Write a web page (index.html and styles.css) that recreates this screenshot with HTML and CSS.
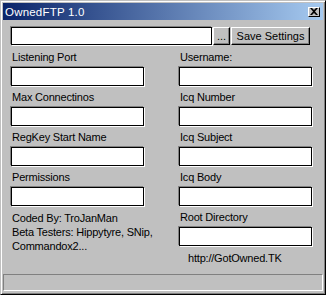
FILE: index.html
```html
<!DOCTYPE html>
<html>
<head>
<meta charset="utf-8">
<link rel="stylesheet" href="styles.css">
</head>
<body>
<div class="window">
  <div class="titlebar">
    <span class="title">OwnedFTP 1.0</span>
    <span class="close"><svg width="8" height="7" viewBox="0 0 8 7"><path d="M0 0h2l2 2 2-2h2L5 3.5 8 7H6L4 5 2 7H0l3-3.5z" fill="#000"/></svg></span>
  </div>
  <div class="content">
    <div class="toprow">
      <div class="field wide"></div>
      <div class="btn dots">...</div>
      <div class="btn save">Save Settings</div>
    </div>
    <div class="cols">
      <div class="col">
        <div class="label">Listening Port</div>
        <div class="field"></div>
        <div class="label">Max Connectinos</div>
        <div class="field"></div>
        <div class="label">RegKey Start Name</div>
        <div class="field"></div>
        <div class="label">Permissions</div>
        <div class="field"></div>
        <div class="info">Coded By: TroJanMan<br>Beta Testers: Hippytyre, SNip,<br>Commandox2...</div>
      </div>
      <div class="col">
        <div class="label">Username:</div>
        <div class="field"></div>
        <div class="label">Icq Number</div>
        <div class="field"></div>
        <div class="label">Icq Subject</div>
        <div class="field"></div>
        <div class="label">Icq Body</div>
        <div class="field"></div>
        <div class="label">Root Directory</div>
        <div class="field"></div>
        <div class="url">http://GotOwned.TK</div>
      </div>
    </div>
  </div>
  <div class="status"></div>
</div>
</body>
</html>
```
FILE: styles.css
```css
html, body {
  margin: 0;
  padding: 0;
  background: #c0c0c0;
}
.window {
  width: 326px;
  height: 295px;
  box-sizing: border-box;
  background: #c0c0c0;
  border-top: 1px solid #c0c0c0;
  border-left: 1px solid #c0c0c0;
  border-right: 1px solid #000;
  border-bottom: 1px solid #000;
  box-shadow: inset 1px 1px 0 #fff, inset -1px -1px 0 #808080;
  padding: 2px;
  display: flex;
  flex-direction: column;
  font-family: "Liberation Sans", Arial, sans-serif;
  font-size: 11px;
  color: #000;
}
.titlebar {
  height: 17px;
  background: linear-gradient(to right, #0a246a, #a6caf0);
  display: flex;
  align-items: center;
  justify-content: space-between;
  padding: 0 2px 0 2px;
}
.title {
  color: #fff;
  font-size: 11.5px;
  letter-spacing: 0.2px;
}
.close {
  width: 12px;
  height: 10px;
  box-sizing: border-box;
  background: #c0c0c0;
  border-top: 1px solid #fff;
  border-left: 1px solid #fff;
  border-right: 1px solid #000;
  border-bottom: 1px solid #000;
  display: flex;
  align-items: center;
  justify-content: center;
  margin-right: 1px;
}
.content {
  flex: 1;
  padding: 7px 0 0 8px;
}
.toprow {
  display: flex;
  height: 18px;
}
.field {
  height: 19px;
  width: 133px;
  box-sizing: border-box;
  background: #fff;
  border: 1px solid #000;
  box-shadow: -1px -1px 0 #808080, 1px 1px 0 #fff;
}
.toprow .field {
  height: 18px;
}
.field.wide {
  width: 201px;
}
.btn {
  box-sizing: border-box;
  height: 18px;
  border-top: 1px solid #fff;
  border-left: 1px solid #fff;
  border-right: 1px solid #000;
  border-bottom: 1px solid #000;
  box-shadow: inset -1px -1px 0 #808080;
  display: flex;
  align-items: center;
  justify-content: center;
  line-height: 13px;
}
.dots {
  width: 17px;
  margin-left: 1px;
}
.save {
  width: 79px;
  margin-left: 1px;
}
.cols {
  display: grid;
  grid-template-columns: 168px 140px;
  margin-top: 1px;
}
.col {
  display: flex;
  flex-direction: column;
}
.label {
  padding-top: 5px;
  height: 16px;
  line-height: 13px;
  padding-left: 1px;
  white-space: nowrap;
  letter-spacing: -0.2px;
}
.info {
  padding-top: 5px;
  line-height: 14px;
  padding-left: 1px;
  white-space: nowrap;
  letter-spacing: -0.2px;
}
.url {
  padding-top: 5px;
  line-height: 14px;
  padding-left: 9px;
  letter-spacing: -0.2px;
}
.status {
  height: 17px;
  box-sizing: border-box;
  border-top: 1px solid #808080;
  border-left: 1px solid #808080;
  border-right: 1px solid #fff;
  border-bottom: 1px solid #fff;
  margin: 0 0 1px 0;
}
```
